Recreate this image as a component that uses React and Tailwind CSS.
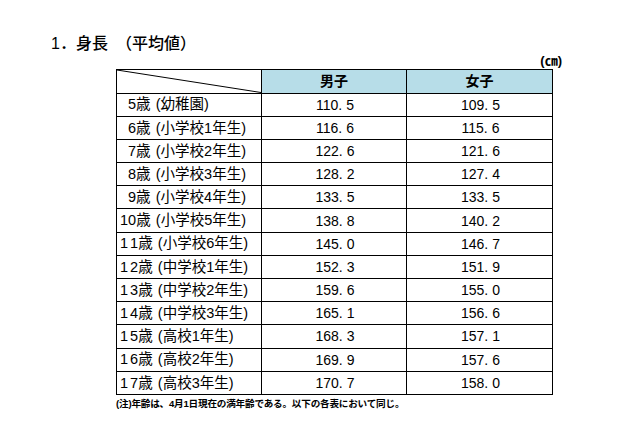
import React from 'react';

const rows = [
  ['5', '幼稚園', '110', '5', '109', '5'],
  ['6', '小学校1年生', '116', '6', '115', '6'],
  ['7', '小学校2年生', '122', '6', '121', '6'],
  ['8', '小学校3年生', '128', '2', '127', '4'],
  ['9', '小学校4年生', '133', '5', '133', '5'],
  ['10', '小学校5年生', '138', '8', '140', '2'],
  ['11', '小学校6年生', '145', '0', '146', '7'],
  ['12', '中学校1年生', '152', '3', '151', '9'],
  ['13', '中学校2年生', '159', '6', '155', '0'],
  ['14', '中学校3年生', '165', '1', '156', '6'],
  ['15', '高校1年生', '168', '3', '157', '1'],
  ['16', '高校2年生', '169', '9', '157', '6'],
  ['17', '高校3年生', '170', '7', '158', '0'],
];

const font = { fontFamily: '"Liberation Sans", "Noto Sans CJK JP", sans-serif' };

const Num = ({ whole, dec }) => (
  <span>
    {whole}.<span className="ml-[4px]">{dec}</span>
  </span>
);

// single-digit ages are padded, 11-17 are spaced wider than 10
const Age = ({ age }) => {
  if (age.length === 1) return <span className="pl-[8px]">{age}</span>;
  if (age === '10') return <span>{age}</span>;
  return (
    <span>
      <span className="mr-[2px]">{age[0]}</span>
      <span>{age[1]}</span>
    </span>
  );
};

const Label = ({ age, grade }) => (
  <span className="flex items-center whitespace-nowrap text-[14.5px]">
    <Age age={age} />
    <span>歳</span>
    <span className="inline-block w-[10px] text-right">(</span>
    <span>{grade}</span>
    <span className="inline-block w-[10px] text-left">)</span>
  </span>
);

export default function App() {
  return (
    <div className="w-[640px] h-[426px] bg-white text-black overflow-hidden" style={font}>
      {/* Title */}
      <h1 className="pt-[33px] pl-[51px] text-[16px] leading-[22px] font-medium">
        1．身長　（平均値）
      </h1>

      {/* unit */}
      <div className="flex justify-end w-[562px] mt-[-1px] text-[13px] leading-[14px] font-bold">
        (㎝)
      </div>

      {/* Table */}
      <table className="ml-[116px] mt-[1px] border-collapse table-fixed text-[14px]">
        <colgroup>
          <col className="w-[145px]" />
          <col className="w-[145px]" />
          <col className="w-[146px]" />
        </colgroup>
        <thead>
          <tr className="h-[23.5px]">
            <th className="relative border border-black p-0">
              <svg className="absolute inset-0 w-full h-full" preserveAspectRatio="none" viewBox="0 0 100 100">
                <line x1="0" y1="0" x2="100" y2="100" stroke="black" strokeWidth="1" vectorEffect="non-scaling-stroke" />
              </svg>
            </th>
            <th className="border border-black bg-[#b7dde8] font-bold p-0 leading-none">男子</th>
            <th className="border border-black bg-[#b7dde8] font-bold p-0 leading-none">女子</th>
          </tr>
        </thead>
        <tbody>
          {rows.map(([age, grade, bw, bd, gw, gd]) => (
            <tr key={age} className="h-[23.2px]">
              <td className="border border-black p-0 pl-[3px] leading-none">
                <Label age={age} grade={grade} />
              </td>
              <td className="border border-black p-0 pl-[2px] text-center leading-none">
                <Num whole={bw} dec={bd} />
              </td>
              <td className="border border-black p-0 pl-[2px] text-center leading-none">
                <Num whole={gw} dec={gd} />
              </td>
            </tr>
          ))}
        </tbody>
      </table>

      {/* Note */}
      <p className="ml-[116px] mt-[3px] text-[9.6px] leading-[12px] font-bold tracking-[-0.2px]">
        (注)年齢は、4月1日現在の満年齢である。以下の各表において同じ。
      </p>
    </div>
  );
}
